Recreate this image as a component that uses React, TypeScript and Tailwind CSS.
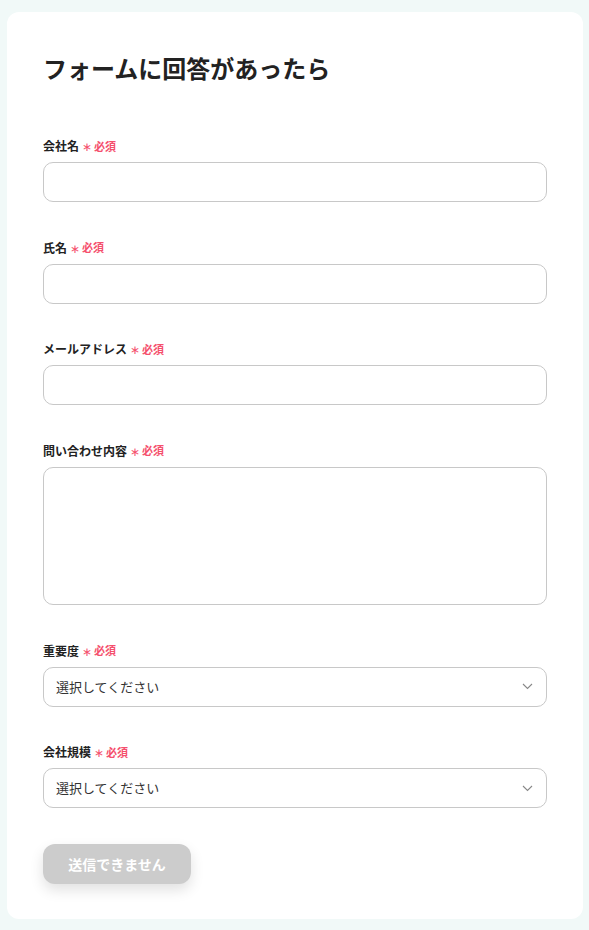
const FONT = { fontFamily: '"Noto Sans CJK JP", "Noto Sans", sans-serif' };

function Label({ text }: { text: string }) {
  return (
    <div className="flex items-center h-4 gap-[3px]">
      <span className="text-[12px] font-bold text-[#222]">{text}</span>
      <span className="text-[11px] font-bold text-[#f5506d] flex items-center gap-[2px]">
        <span className="text-[12px] leading-none font-normal">∗</span>
        必須
      </span>
    </div>
  );
}

function Field({ label, children }: { label: string; children: React.ReactNode }) {
  return (
    <div className="flex flex-col gap-2">
      <Label text={label} />
      {children}
    </div>
  );
}

function SelectBox() {
  return (
    <div className="h-10 rounded-[10px] border border-[#c8c8c8] flex items-center justify-between pl-3 pr-[13px]">
      <span className="text-[13px] text-[#333]">選択してください</span>
      <svg width="11" height="7" viewBox="0 0 11 7" fill="none">
        <path d="M1 1l4.5 4.5L10 1" stroke="#888" strokeWidth="1.1" />
      </svg>
    </div>
  );
}

export default function App() {
  return (
    <div className="min-h-[930px] bg-[#f1f9f8] pt-3 pl-[7px] pr-[6px] pb-[11px]" style={FONT}>
      <div className="bg-white rounded-xl px-9 pt-10 pb-[35px]">
        <h1 className="text-[24px] leading-8 font-bold text-[#222]">フォームに回答があったら</h1>
        <div className="mt-[54px] flex flex-col gap-[37.5px]">
          <Field label="会社名">
            <div className="h-10 rounded-[10px] border border-[#c8c8c8]" />
          </Field>
          <Field label="氏名">
            <div className="h-10 rounded-[10px] border border-[#c8c8c8]" />
          </Field>
          <Field label="メールアドレス">
            <div className="h-10 rounded-[10px] border border-[#c8c8c8]" />
          </Field>
          <Field label="問い合わせ内容">
            <div className="h-[138.5px] rounded-[10px] border border-[#c8c8c8]" />
          </Field>
          <Field label="重要度">
            <SelectBox />
          </Field>
          <Field label="会社規模">
            <SelectBox />
          </Field>
          <div className="-mt-[1.5px]">
            <button className="h-10 w-[148px] rounded-xl bg-[#cccccc] text-white text-[14px] font-bold shadow-[0_6px_14px_rgba(0,0,0,0.12)]">
              送信できません
            </button>
          </div>
        </div>
      </div>
    </div>
  );
}
